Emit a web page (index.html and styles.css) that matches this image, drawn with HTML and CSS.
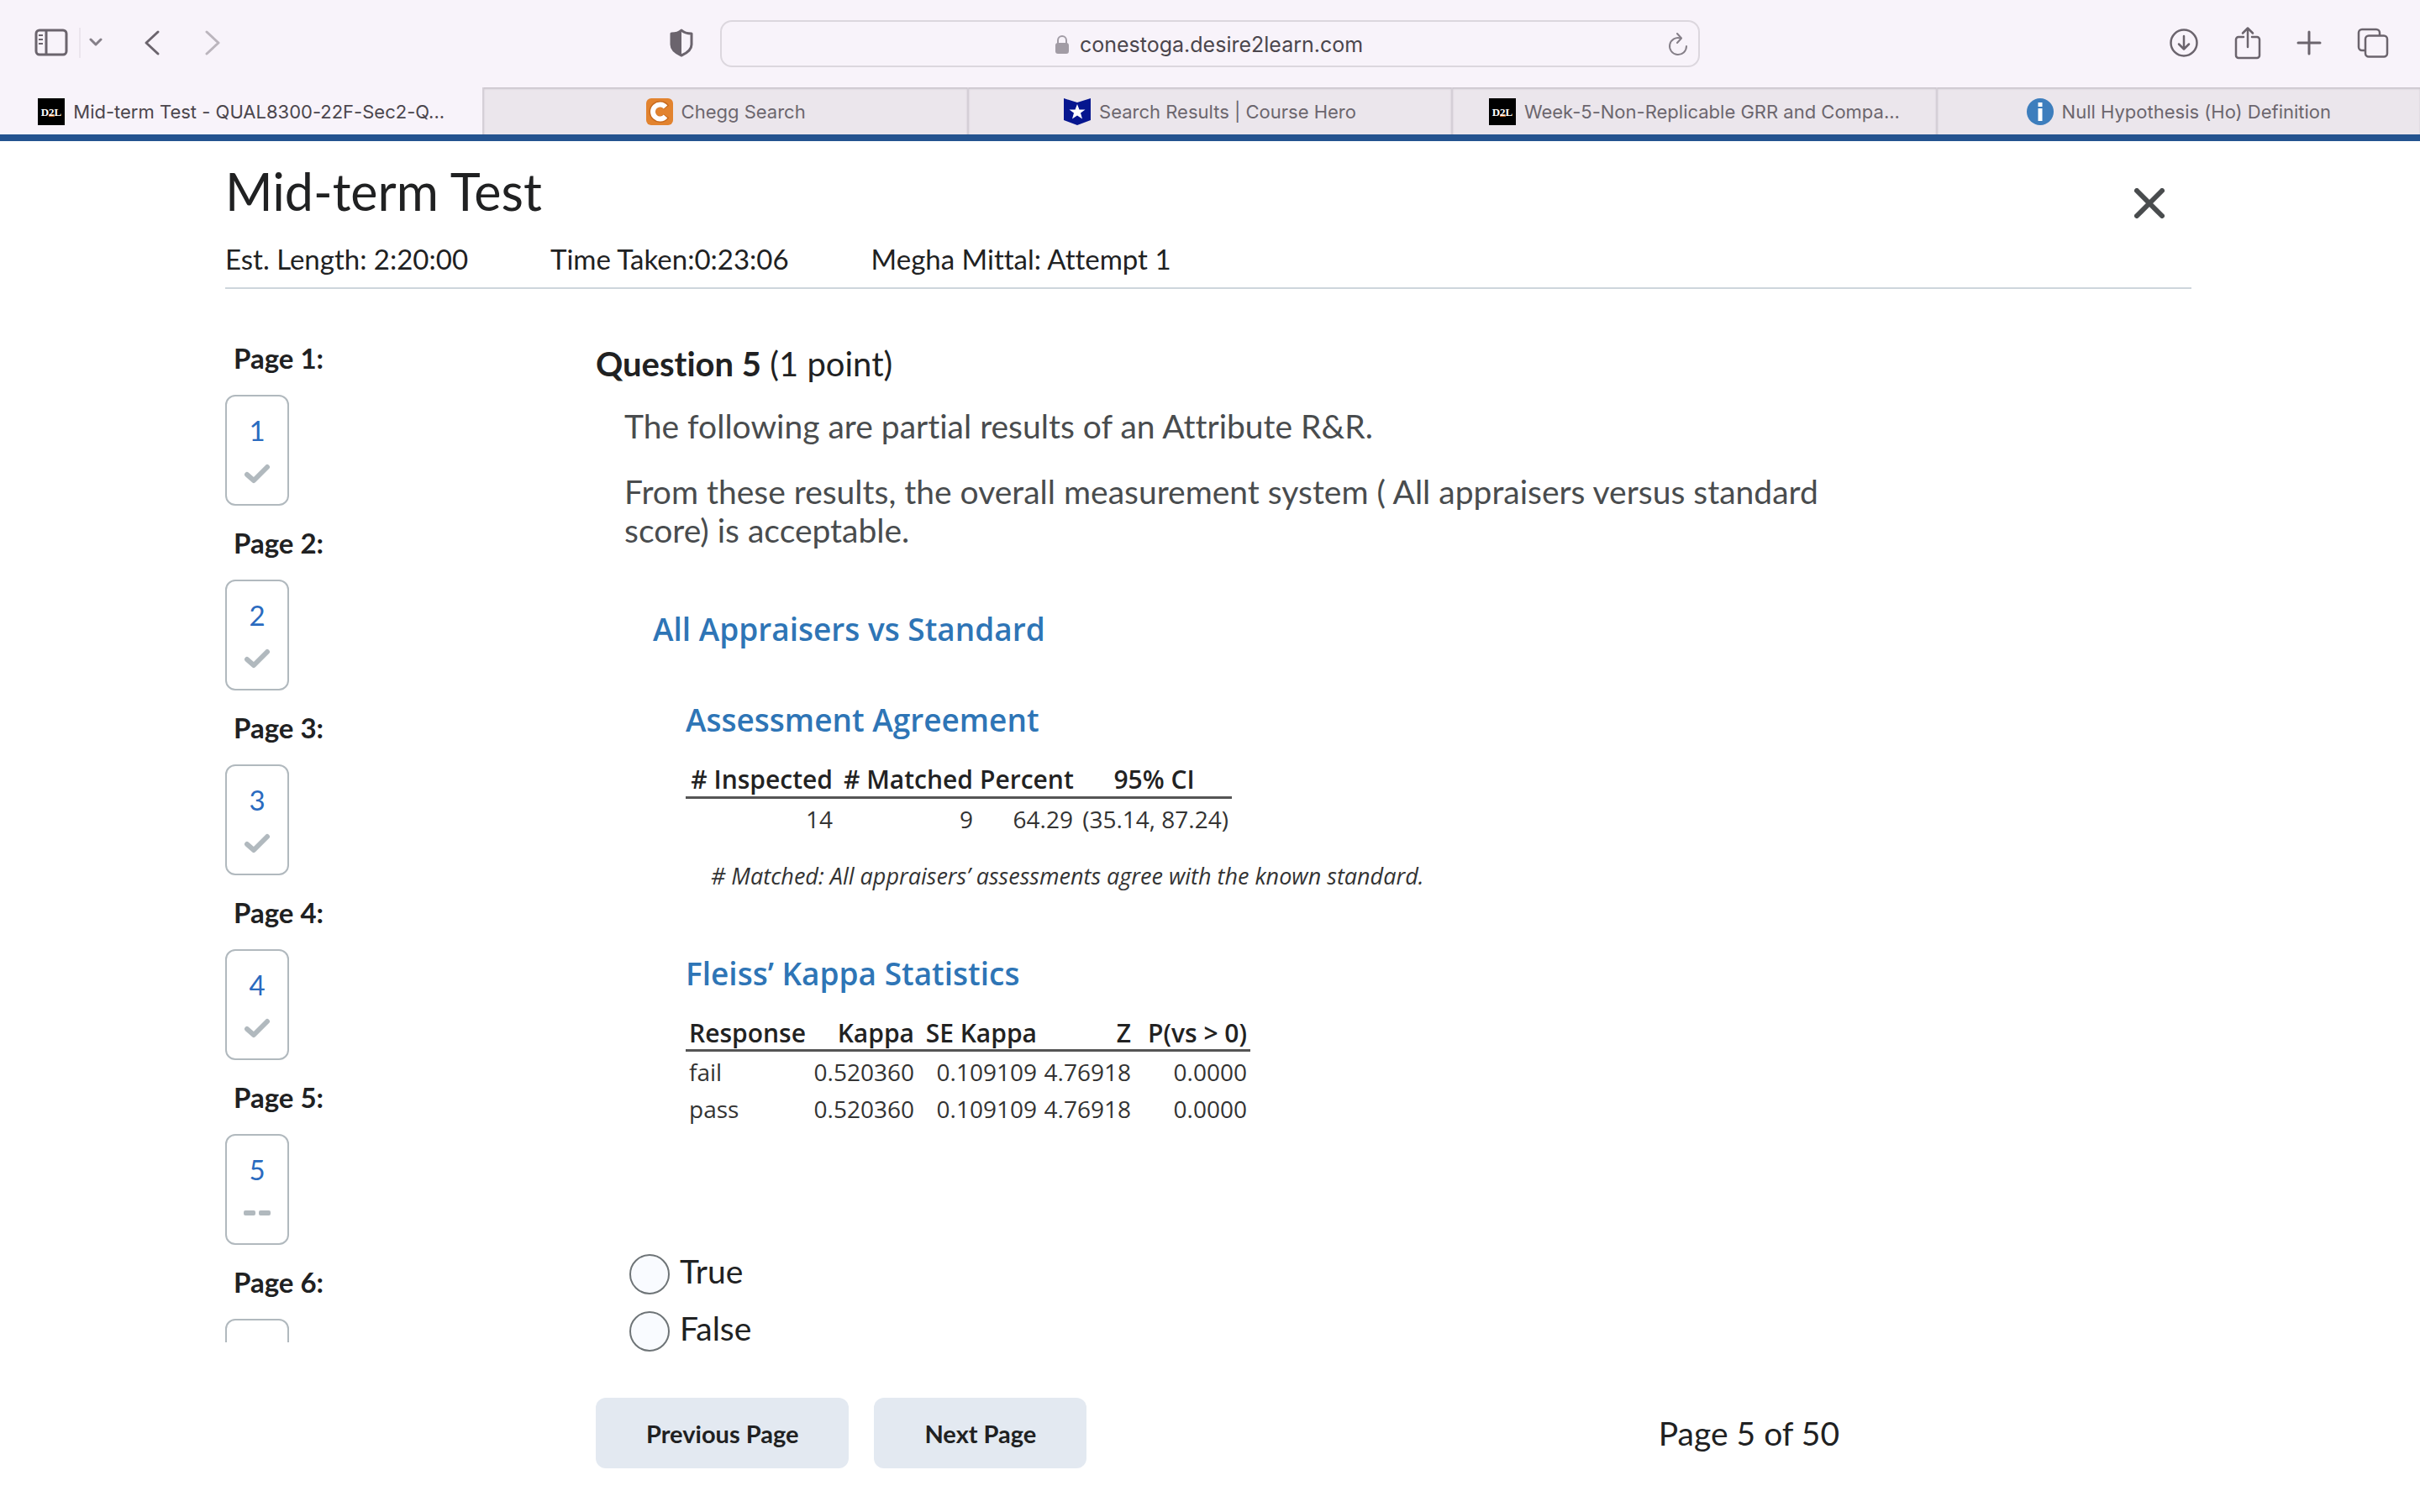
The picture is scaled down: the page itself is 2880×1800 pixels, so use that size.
FILE: index.html
```html
<!DOCTYPE html>
<html lang="en">
<head>
  <meta charset="UTF-8">
  <meta name="viewport" content="width=device-width, initial-scale=1.0">
  <title>Mid-term Test</title>
  <link rel="stylesheet" href="styles.css">
</head>
<body>

  <header class="browser">
    <div class="toolbar">
      <div class="tools tools-left">
        <button class="tool" aria-label="Show sidebar">
          <svg width="40" height="34" viewBox="0 0 40 34" fill="none" stroke="#6b646d" stroke-width="3">
            <rect x="2" y="2" width="36" height="29" rx="4"/>
            <path d="M14 2v29"/>
            <path d="M5 8h5M5 13h5M5 18h5" stroke-width="2"/>
          </svg>
        </button>
        <span class="divider"></span>
        <button class="tool tool-menu" aria-label="Tab groups">
          <svg width="16" height="12" viewBox="0 0 16 12" fill="none" stroke="#857f88" stroke-width="3" stroke-linecap="round" stroke-linejoin="round"><path d="M2 2l6 6 6-6"/></svg>
        </button>
        <button class="tool tool-back" aria-label="Back">
          <svg width="20" height="32" viewBox="0 0 20 32" fill="none" stroke="#6b646d" stroke-width="3" stroke-linecap="round" stroke-linejoin="round"><path d="M17 3L3 16l14 13"/></svg>
        </button>
        <button class="tool tool-forward" aria-label="Forward">
          <svg width="20" height="32" viewBox="0 0 20 32" fill="none" stroke="#bbb5bd" stroke-width="3" stroke-linecap="round" stroke-linejoin="round"><path d="M3 3l14 13L3 29"/></svg>
        </button>
        <button class="tool tool-shield" aria-label="Privacy report">
          <svg width="28" height="34" viewBox="0 0 28 34">
            <path d="M14 2C11 5 7 6 2 6v13c0 6 5 10 12 13 7-3 12-7 12-13V6C21 6 17 5 14 2z" fill="none" stroke="#6b646d" stroke-width="3" stroke-linejoin="round"/>
            <path d="M14 2C11 5 7 6 2 6v13c0 6 5 10 12 13z" fill="#6b646d"/>
          </svg>
        </button>
      </div>

      <form class="address">
        <svg class="lock" width="18" height="24" viewBox="0 0 18 24"><path d="M4 12V7a5 5 0 0 1 10 0v5" fill="none" stroke="#a29ca5" stroke-width="2"/><rect x="1" y="10" width="16" height="13" rx="3" fill="#a29ca5"/></svg>
        <input class="url" type="text" aria-label="Address" value="conestoga.desire2learn.com">
        <button class="tool reload" type="button" aria-label="Reload">
          <svg width="24" height="28" viewBox="0 0 24 28" fill="none" stroke="#857f88" stroke-width="2" stroke-linecap="round" stroke-linejoin="round"><path d="M15 6.500A10 10 0 1 0 22 16"/><path d="M11 1l5 5.500-5 5.500"/></svg>
        </button>
      </form>

      <div class="tools tools-right">
        <button class="tool" aria-label="Downloads">
          <svg width="36" height="36" viewBox="0 0 36 36" fill="none" stroke="#6b646d" stroke-width="2.500" stroke-linecap="round" stroke-linejoin="round"><circle cx="18" cy="18" r="15.500"/><path d="M18 10v15M12 19.500l6 6 6-6"/></svg>
        </button>
        <button class="tool" aria-label="Share">
          <svg width="32" height="40" viewBox="0 0 32 40" fill="none" stroke="#6b646d" stroke-width="2.500" stroke-linecap="round" stroke-linejoin="round"><path d="M11 13H5a3 3 0 0 0-3 3v19a3 3 0 0 0 3 3h22a3 3 0 0 0 3-3V16a3 3 0 0 0-3-3h-6"/><path d="M16 25V3M10 8.500L16 2.500l6 6"/></svg>
        </button>
        <button class="tool" aria-label="New tab">
          <svg width="30" height="30" viewBox="0 0 30 30" fill="none" stroke="#6b646d" stroke-width="3" stroke-linecap="round"><path d="M15 2v26M2 15h26"/></svg>
        </button>
        <button class="tool" aria-label="Tab overview">
          <svg width="38" height="36" viewBox="0 0 38 36" fill="none" stroke="#6b646d" stroke-width="2.500" stroke-linejoin="round"><rect x="10" y="9.500" width="26" height="25" rx="4"/><path d="M10 27H6a4 4 0 0 1-4-4V6a4 4 0 0 1 4-4h17a4 4 0 0 1 4 4v3.500"/></svg>
        </button>
      </div>
    </div>

    <nav class="tabs">
      <a class="tab active" href="#">
        <svg width="32" height="32" viewBox="0 0 32 32"><rect width="32" height="32"/><rect x="13" y="19" width="7" height="3" fill="#c0601c"/><text x="16" y="21" class="d2l">D2L</text></svg>
        <span>Mid-term Test - QUAL8300-22F-Sec2-Q...</span>
      </a>
      <a class="tab" href="#">
        <svg width="32" height="32" viewBox="0 0 32 32"><rect width="32" height="32" rx="6" fill="#e2832f"/><path d="M24 11A9 9 0 1 0 24 21" fill="none" stroke="#c86a1d" stroke-width="8"/><path d="M23 10.500A8.500 8.500 0 1 0 23 21.500" fill="none" stroke="#fff" stroke-width="6"/></svg>
        <span>Chegg Search</span>
      </a>
      <a class="tab" href="#">
        <svg width="32" height="32" viewBox="0 0 32 32"><path d="M0 0l16 5L32 0v26l-16 6L0 26z" fill="#06168f"/><path d="M16 7l2.500 6.500h7l-5.500 4 2 7-6-4-6 4 2-7-5.500-4h7z" fill="#fff"/></svg>
        <span>Search Results | Course Hero</span>
      </a>
      <a class="tab" href="#">
        <svg width="32" height="32" viewBox="0 0 32 32"><rect width="32" height="32"/><rect x="13" y="19" width="7" height="3" fill="#c0601c"/><text x="16" y="21" class="d2l">D2L</text></svg>
        <span>Week-5-Non-Replicable GRR and Compa...</span>
      </a>
      <a class="tab" href="#">
        <svg width="32" height="32" viewBox="0 0 32 32"><circle cx="16" cy="16" r="16" fill="#3d7ebd"/><path d="M13.500 5h5v5h-5zM13.500 12h5v15h-5z" fill="#fff"/></svg>
        <span>Null Hypothesis (Ho) Definition</span>
      </a>
    </nav>
  </header>

  <div class="quiz">
    <header class="quiz-header">
      <div class="title-row">
        <h1>Mid-term Test</h1>
        <button class="close" aria-label="Close">
          <svg width="36" height="36" viewBox="0 0 36 36" stroke="#494c4e" stroke-width="6" stroke-linecap="round"><path d="M3 3l30 30M33 3L3 33"/></svg>
        </button>
      </div>
      <div class="info">
        <span>Est. Length: 2:20:00</span>
        <span>Time Taken:0:23:06</span>
        <span>Megha Mittal: Attempt 1</span>
      </div>
    </header>

    <div class="quiz-body">
      <nav class="pages">
        <h2>Page 1:</h2>
        <a class="page-box" href="#">1<svg width="32" height="24" viewBox="0 0 32 24"><path d="M4 13l8 7L28 4"/></svg></a>
        <h2>Page 2:</h2>
        <a class="page-box" href="#">2<svg width="32" height="24" viewBox="0 0 32 24"><path d="M4 13l8 7L28 4"/></svg></a>
        <h2>Page 3:</h2>
        <a class="page-box" href="#">3<svg width="32" height="24" viewBox="0 0 32 24"><path d="M4 13l8 7L28 4"/></svg></a>
        <h2>Page 4:</h2>
        <a class="page-box" href="#">4<svg width="32" height="24" viewBox="0 0 32 24"><path d="M4 13l8 7L28 4"/></svg></a>
        <h2>Page 5:</h2>
        <a class="page-box" href="#">5<svg width="32" height="24" viewBox="0 0 32 24"><rect x="0" y="9" width="14" height="6" rx="2"/><rect x="18" y="9" width="14" height="6" rx="2"/></svg></a>
        <h2>Page 6:</h2>
        <a class="page-box" href="#" aria-label="6"></a>
      </nav>

      <main class="question">
        <h2><b>Question 5</b> (1 point)</h2>
        <div class="question-text">
          <p>The following are partial results of an Attribute R&amp;R.</p>
          <p>From these results, the overall measurement system ( All appraisers versus standard score) is acceptable.</p>
        </div>

        <div class="report">
          <h3>All Appraisers vs Standard</h3>
          <div class="report-section">
            <h4>Assessment Agreement</h4>
            <table class="agreement">
              <colgroup><col class="inspected"><col class="matched"><col class="percent"><col></colgroup>
              <thead>
                <tr><th># Inspected</th><th># Matched</th><th>Percent</th><th class="center">95% CI</th></tr>
              </thead>
              <tbody>
                <tr><td>14</td><td>9</td><td>64.29</td><td>(35.14, 87.24)</td></tr>
              </tbody>
            </table>
            <p class="note"># Matched: All appraisers’ assessments agree with the known standard.</p>
            <h4>Fleiss’ Kappa Statistics</h4>
            <table class="kappa">
              <colgroup><col class="response"><col class="value"><col class="se"><col class="z"><col></colgroup>
              <thead>
                <tr><th class="left">Response</th><th>Kappa</th><th>SE Kappa</th><th>Z</th><th>P(vs &gt; 0)</th></tr>
              </thead>
              <tbody>
                <tr><td class="left">fail</td><td>0.520360</td><td>0.109109</td><td>4.76918</td><td>0.0000</td></tr>
                <tr><td class="left">pass</td><td>0.520360</td><td>0.109109</td><td>4.76918</td><td>0.0000</td></tr>
              </tbody>
            </table>
          </div>
        </div>

        <div class="answers">
          <div class="answer"><input type="radio" name="answer" id="true"><label for="true">True</label></div>
          <div class="answer"><input type="radio" name="answer" id="false"><label for="false">False</label></div>
        </div>
      </main>

      <footer class="pager">
        <button class="btn">Previous Page</button>
        <button class="btn">Next Page</button>
        <span class="page-count">Page 5 of 50</span>
      </footer>
    </div>
  </div>

</body>
</html>
```
FILE: styles.css
```css
* {
  box-sizing: border-box;
}
body {
  margin: 0;
  height: 100vh;
  display: flex;
  flex-direction: column;
  overflow: hidden;
  background: #fff;
  color: #202122;
  font-family: Lato, sans-serif;
  font-variant-ligatures: none;
}
h1, h2, h3, h4, p {
  margin: 0;
}
button {
  border: none;
  background: none;
  padding: 0;
  color: inherit;
  font-family: inherit;
  cursor: pointer;
}
svg {
  display: block;
  flex: none;
}

/* browser window */
.browser {
  background: #f8f3fa;
  border-bottom: 8px solid #24538f;
  font-family: Inter, sans-serif;
}
.toolbar {
  height: 104px;
  display: grid;
  grid-template-columns: 1fr 1166px 1fr;
  align-items: center;
}
.tools {
  display: flex;
  align-items: center;
}
.tools-left {
  padding: 0 32px 2px 41px;
}
.tools-right {
  justify-content: flex-end;
  gap: 42px;
  padding: 0 37px 2px 0;
}
.divider {
  width: 2px;
  height: 36px;
  margin: 0 10px 0 13px;
  background: #ebe5ed;
}
.tool-back {
  margin-left: 49px;
}
.tool-forward {
  margin-left: 52px;
}
.tool-shield {
  margin-left: auto;
}
.address {
  height: 56px;
  display: flex;
  align-items: center;
  justify-content: center;
  border: 2px solid #dcd7de;
  border-radius: 14px;
  padding: 2px 12px 0 40px;
}
.lock {
  margin-left: auto;
}
.url {
  width: 344px;
  margin-left: 12px;
  padding: 0;
  border: none;
  background: none;
  color: #4b464d;
  font-family: inherit;
  font-size: 25px;
}
.reload {
  margin-left: auto;
}
.tabs {
  display: flex;
  height: 56px;
}
.tab {
  flex: 1;
  display: flex;
  align-items: center;
  justify-content: center;
  gap: 10px;
  padding-top: 2px;
  border-left: 2px solid #d5cfd7;
  background: #ebe6ec;
  box-shadow: inset 0 2px 2px #cbc5cd;
  color: #6c666e;
  font-size: 22px;
  text-decoration: none;
  white-space: nowrap;
}
.tab.active {
  border-left: none;
  background: none;
  box-shadow: none;
  color: #4b464d;
}
.d2l {
  fill: #fff;
  font: bold 13px "Liberation Serif", serif;
  text-anchor: middle;
}

/* quiz */
.quiz {
  flex: 1;
  min-height: 0;
  display: flex;
  flex-direction: column;
  padding: 0 272px 0 268px;
}
.quiz-header {
  height: 176px;
  border-bottom: 2px solid #cdd5dc;
}
.title-row {
  display: flex;
  justify-content: space-between;
  padding: 22px 32px 0 0;
}
h1 {
  font-size: 61px;
  font-weight: 400;
  line-height: 76px;
}
.close {
  align-self: flex-end;
  height: 48px;
}
.info {
  display: flex;
  gap: 98px;
  padding-top: 22px;
  font-size: 33px;
  line-height: 40px;
}
.quiz-body {
  flex: 1;
  min-height: 0;
  display: grid;
  grid-template-columns: 441px minmax(0, 1480px);
  grid-template-rows: minmax(0, 1fr) auto;
}
.pages {
  overflow: hidden;
  padding-top: 62px;
}
.pages h2 {
  padding-left: 10px;
  font-size: 33px;
  line-height: 40px;
}
.page-box {
  width: 76px;
  height: 132px;
  margin: 24px 0;
  display: flex;
  flex-direction: column;
  align-items: center;
  gap: 20px;
  padding-top: 20px;
  border: 2px solid #b1b9be;
  border-radius: 12px;
  color: #2a6bbf;
  font-size: 33px;
  line-height: 40px;
  text-decoration: none;
}
.page-box path {
  fill: none;
  stroke: #b1b9be;
  stroke-width: 6;
  stroke-linecap: round;
  stroke-linejoin: round;
}
.page-box rect {
  fill: #b1b9be;
}
.question {
  padding-top: 66px;
  font-size: 39px;
  line-height: 46px;
}
.question h2 {
  font-size: 40px;
  font-weight: 400;
}
.question-text {
  padding: 28px 0 0 34px;
  color: #494c4e;
}
.question-text p {
  margin-bottom: 32px;
}

/* statistics report */
.report {
  padding: 37px 0 0 68px;
  color: #333;
  font-family: "Open Sans", sans-serif;
}
.report h3,
.report h4 {
  color: #2e75b6;
  font-size: 37px;
  font-weight: 600;
  line-height: 52px;
}
.report-section {
  padding: 56px 0 0 39px;
}
table {
  table-layout: fixed;
  border-collapse: collapse;
  margin-top: 26px;
}
.agreement {
  width: 650px;
}
.kappa {
  width: 672px;
}
.inspected {
  width: 179px;
}
.matched {
  width: 167px;
}
.percent {
  width: 119px;
}
.response {
  width: 148px;
}
.value {
  width: 128px;
}
.se {
  width: 146px;
}
.z {
  width: 112px;
}
th, td {
  padding: 0 4px;
  font-size: 28px;
  line-height: 44px;
  text-align: right;
  white-space: nowrap;
}
th {
  height: 40px;
  border-bottom: 3px solid #555;
  color: #222;
  font-size: 30px;
  font-weight: 600;
  line-height: 36px;
}
tbody tr:first-child td {
  padding-top: 2px;
}
.center {
  text-align: center;
}
.left {
  text-align: left;
}
.note {
  padding: 24px 0 68px 30px;
  font-size: 27px;
  font-style: italic;
  line-height: 44px;
}
.answers {
  display: grid;
  gap: 20px;
  padding: 151px 0 0 40px;
}
.answer {
  display: flex;
  align-items: center;
  gap: 12px;
}
.answer input {
  appearance: none;
  width: 48px;
  height: 48px;
  margin: 0;
  border: 2px solid #6e7477;
  border-radius: 50%;
  background: #f9fbff;
}
.answer label {
  padding-bottom: 8px;
  line-height: 40px;
}
.pager {
  grid-column: 2;
  display: flex;
  align-items: center;
  gap: 30px;
  padding: 66px 0 52px;
}
.btn {
  height: 84px;
  padding: 0 60px;
  border-radius: 12px;
  background: #e3e9f1;
  font-size: 29px;
  font-weight: 700;
}
.page-count {
  margin-left: auto;
  font-size: 39px;
}
```
